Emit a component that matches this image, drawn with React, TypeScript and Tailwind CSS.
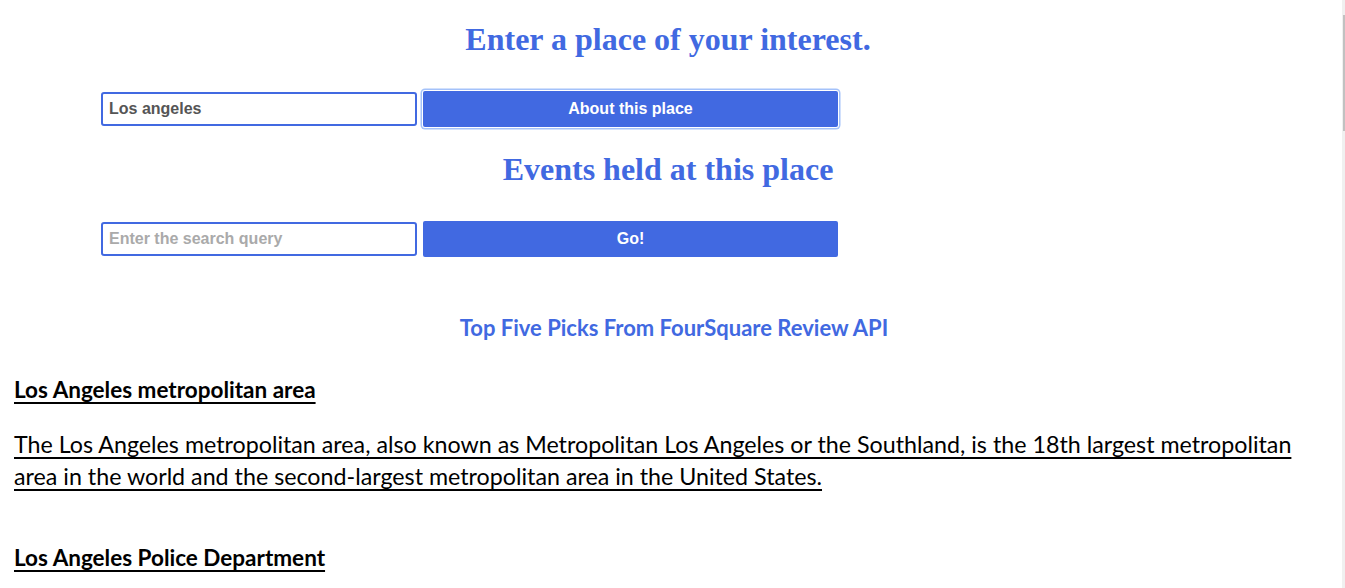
import React from 'react';

const serif = "font-['Liberation_Serif','Times_New_Roman',serif]";
const arial = "font-['Liberation_Sans',Arial,sans-serif]";
const body = "font-['Lato','Open_Sans',sans-serif]";

const picks = [
  {
    title: 'Los Angeles metropolitan area',
    text: 'The Los Angeles metropolitan area, also known as Metropolitan Los Angeles or the Southland, is the 18th largest metropolitan area in the world and the second-largest metropolitan area in the United States.',
  },
  { title: 'Los Angeles Police Department', text: '' },
];

const SearchRow = ({
  value,
  placeholder,
  label,
  focused,
}: {
  value?: string;
  placeholder?: string;
  label: string;
  focused?: boolean;
}) => (
  <div className="flex items-center pl-[101px] gap-[6px]">
    <input
      defaultValue={value}
      placeholder={placeholder}
      className={`${arial} w-[316px] h-[34px] border-2 border-[#4169e1] rounded-[3px] px-[6px] text-[16px] font-bold text-[#555] placeholder:text-[#aaa] outline-none`}
    />
    <button
      className={`${arial} w-[415px] h-[36px] bg-[#4169e1] rounded-[2px] text-white text-[16px] font-bold ${
        focused ? 'shadow-[0_0_0_1px_#fff,0_0_0_2.5px_#a4c2fa]' : ''
      }`}
    >
      {label}
    </button>
  </div>
);

export default function App() {
  return (
    <div className="flex w-[1345px] h-[588px] overflow-hidden bg-white">
      <div className="flex-1 flex flex-col">
        {/* top search */}
        <h1 className={`${serif} text-[32px] font-bold text-[#4169e1] text-center leading-[34px] mt-[22px] mb-[35px] pr-[6px]`}>
          Enter a place of your interest.
        </h1>
        <SearchRow value="Los angeles" label="About this place" focused />
        <h2 className={`${serif} text-[32px] font-bold text-[#4169e1] text-center leading-[34px] mt-[25px] mb-[35px] pr-[6px]`}>
          Events held at this place
        </h2>
        <SearchRow placeholder="Enter the search query" label="Go!" />

        <h3 className={`${body} text-[22px] font-bold text-[#4169e1] text-center leading-[24px] mt-[59px] pl-[6px]`}>
          Top Five Picks From FourSquare Review API
        </h3>

        {/* picks list */}
        <div className="px-[14px] mt-[38px] flex flex-col">
          {picks.map((p) => (
            <div key={p.title} className="flex flex-col">
              <div className={`${body} text-[22.5px] font-bold underline decoration-2 underline-offset-[4px] text-black leading-[24px]`}>
                {p.title}
              </div>
              {p.text && (
                <p className={`${body} text-[23.25px] text-black underline underline-offset-[4px] leading-[32px] mt-[26px] mb-[54px]`}>
                  {p.text}
                </p>
              )}
            </div>
          ))}
        </div>
      </div>
      <div className="w-[3px] bg-[#f0f0f0] pt-[15px]">
        <div className="w-[2px] h-[116px] ml-px bg-[#c1c1c1]" />
      </div>
    </div>
  );
}
